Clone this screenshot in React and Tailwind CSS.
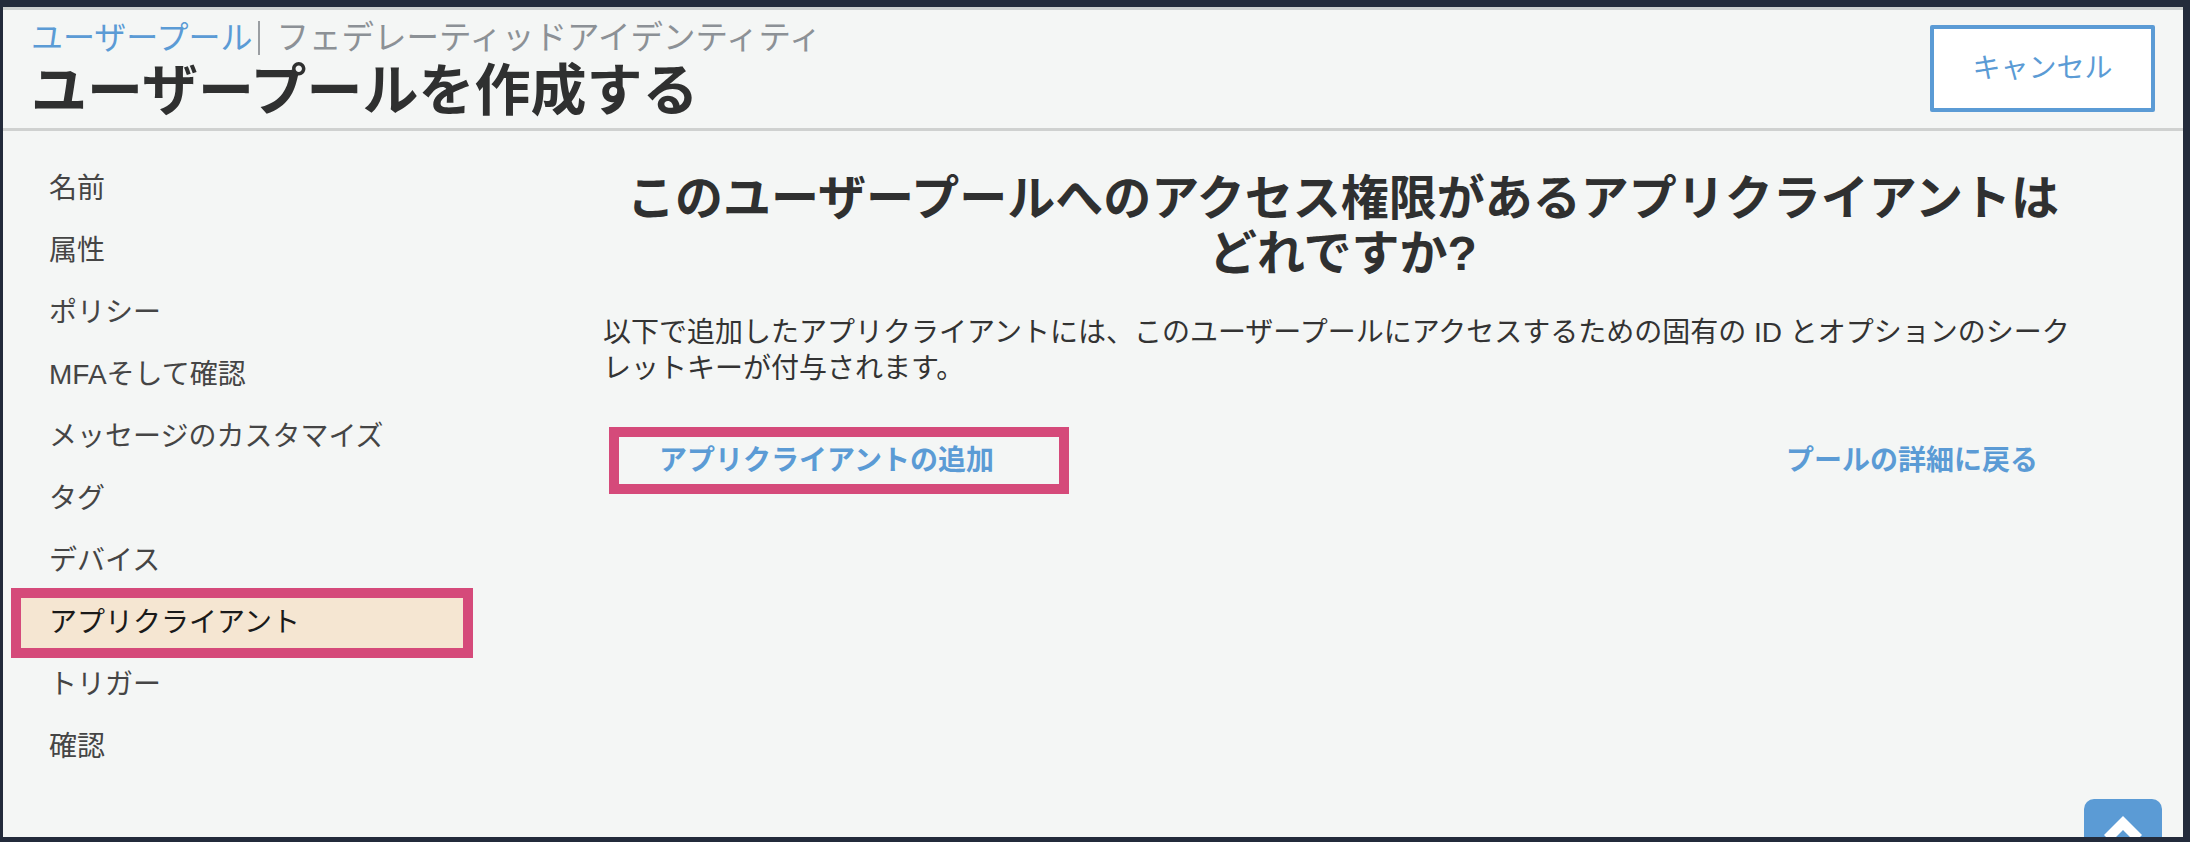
const navItems = [
  "名前",
  "属性",
  "ポリシー",
  "MFAそして確認",
  "メッセージのカスタマイズ",
  "タグ",
  "デバイス",
  "アプリクライアント",
  "トリガー",
  "確認",
];

export default function App() {
  const active = "アプリクライアント";

  return (
    <div className="h-[842px] w-full overflow-hidden bg-[#232b3b] pt-[7px] pb-[5px] pl-[3px] pr-[7px] font-['Liberation_Sans','Noto_Sans_CJK_JP',sans-serif]">
      <div className="relative flex h-full flex-col border-t-[3px] border-[#cdd0cf] bg-[#f4f6f5]">
        {/* header */}
        <header className="flex h-[121px] shrink-0 items-start justify-between border-b-[3px] border-[#cfd1d0] px-[28px]">
          <div className="pt-[10px]">
            <div className="flex items-center text-[32px] leading-[36px]">
              <span className="text-[#5b9bd5]">ユーザープール</span>
              <span className="ml-[6px] mr-[16px] h-[34px] w-[2px] bg-[#9a9ea2]" />
              <span className="text-[32.5px] text-[#8c9196]">フェデレーティッドアイデンティティ</span>
            </div>
            <h1 className="mt-[5px] text-[56px] font-bold leading-[60px] text-[#2f3030]">
              ユーザープールを作成する
            </h1>
          </div>
          <button className="mt-[15px] h-[87px] w-[225px] rounded-[2px] border-[4px] border-[#5b9bd5] bg-white text-[28px] text-[#5b9bd5]">
            キャンセル
          </button>
        </header>

        <div className="flex flex-1">
          {/* sidebar */}
          <nav className="flex w-[460px] shrink-0 flex-col gap-[12px] pl-[18px] pt-[33px]">
            {navItems.map((item) =>
              item === active ? (
                <div
                  key={item}
                  className="flex h-[50px] w-[442px] items-center bg-[#f5e6d2] px-[28px] text-[28px] text-[#1a1a1a] outline-solid outline-[10px] outline-[#d54a7a]"
                >
                  {item}
                </div>
              ) : (
                <div
                  key={item}
                  className="flex h-[50px] w-[442px] items-center px-[28px] text-[28px] text-[#454545]"
                >
                  {item}
                </div>
              )
            )}
          </nav>

          {/* main */}
          <main className="flex-1 pl-[140px] pr-[100px] pt-[40px]">
            <h2 className="text-center text-[48px] font-bold leading-[55px] text-[#2f3030]">
              このユーザープールへのアクセス権限があるアプリクライアントは
              <br />
              どれですか?
            </h2>
            <p className="mt-[34px] text-[28px] leading-[36px] text-[#333]">
              以下で追加したアプリクライアントには、このユーザープールにアクセスするための固有の ID とオプションのシークレットキーが付与されます。
            </p>
            <div className="mt-[50px] flex items-center justify-between">
              <button className="ml-[16px] h-[47px] w-[440px] pl-[40px] text-left text-[28px] font-bold text-[#5b9bd5] outline-solid outline-[10px] outline-[#d54a7a]">
                アプリクライアントの追加
              </button>
              <button className="pr-[45px] text-[28px] font-bold text-[#5b9bd5]">
                プールの詳細に戻る
              </button>
            </div>
          </main>
        </div>

        {/* scroll to top */}
        <div className="absolute bottom-0 right-[21px] flex h-[38px] w-[78px] justify-center rounded-t-[10px] bg-[#5b9bd5]">
          <svg width="78" height="38" viewBox="0 0 78 38">
            <path d="M39 17 L20 36 L27 43 L39 31 L51 43 L58 36 Z" fill="white" />
          </svg>
        </div>
      </div>
    </div>
  );
}
